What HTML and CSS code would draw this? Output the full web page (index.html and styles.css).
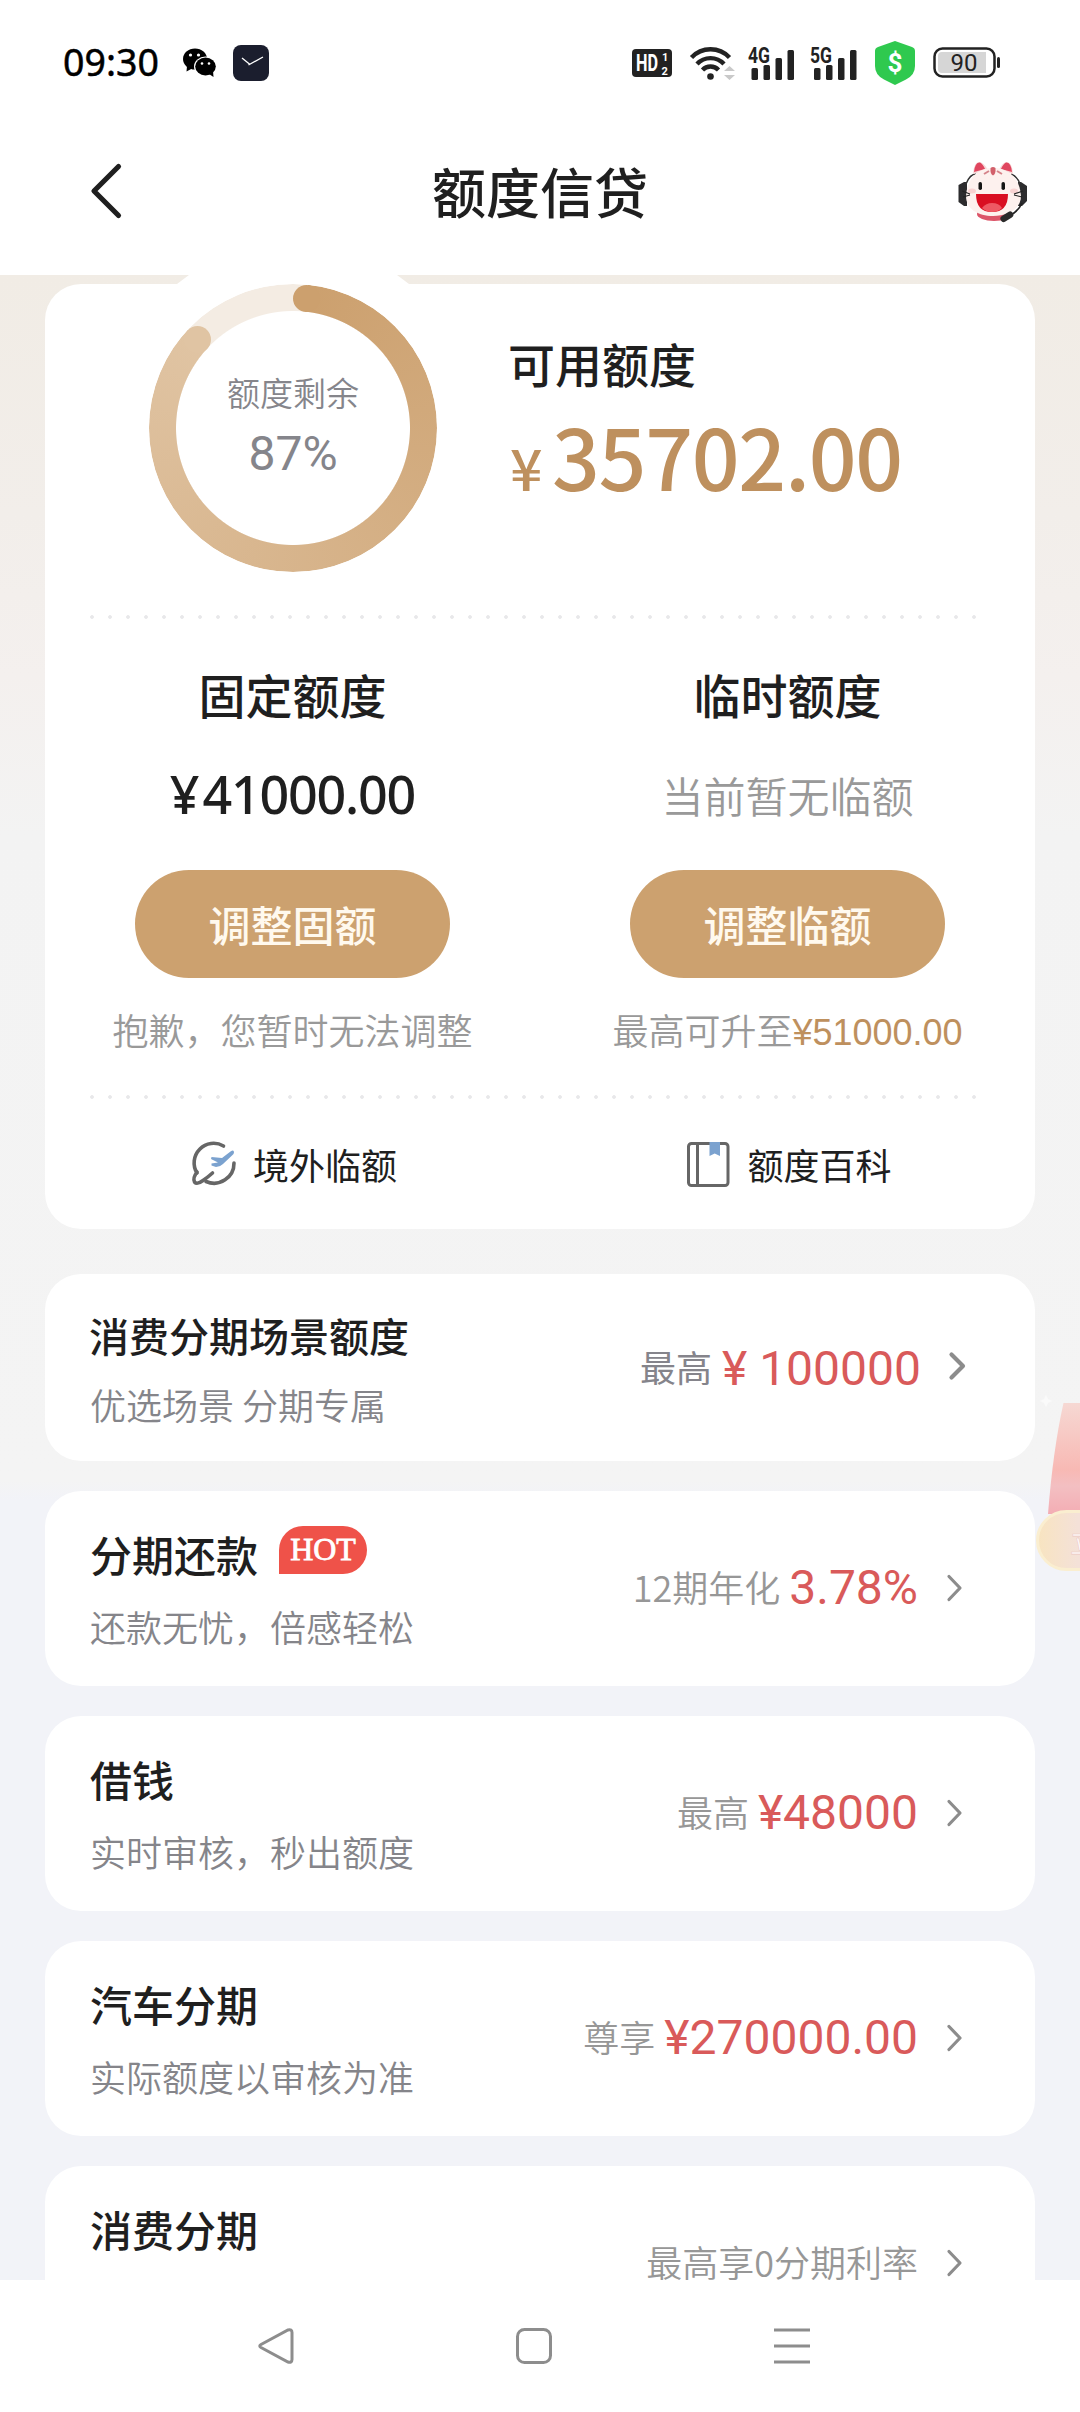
FILE: index.html
```html
<!DOCTYPE html>
<html lang="zh-CN">
<head>
<meta charset="utf-8">
<title>额度信贷</title>
<link rel="stylesheet" href="styles.css">
</head>
<body>
<div class="screen">
  <header class="top">
    <div class="status">
      <span class="clock">09:30</span>
      <svg class="wechat" width="33" height="29" viewBox="0 0 33 29">
        <ellipse cx="12" cy="11" rx="12" ry="10.5"/>
        <path d="M4 18 L3.5 23.500 L10 20z"/>
        <ellipse cx="22.500" cy="18.500" rx="11.500" ry="10" fill="#fff"/>
        <ellipse cx="22.500" cy="18.500" rx="10.300" ry="8.900"/>
        <path d="M26 26 L30.500 29 L30 23z"/>
        <g fill="#fff"><circle cx="7.500" cy="7" r="1.600"/><circle cx="15.500" cy="7" r="1.600"/><circle cx="19" cy="15.500" r="1.300"/><circle cx="26" cy="15.500" r="1.300"/></g>
      </svg>
      <svg class="clock-app" width="36" height="36" viewBox="0 0 36 36">
        <rect width="36" height="36" rx="8" fill="#1b1e2e"/>
        <path d="M9 13 L17 19.500 M15.500 20 L30 12" stroke="#fff" stroke-width="1.300" fill="none"/>
      </svg>
      <div class="status-right">
        <svg width="40" height="28" viewBox="0 0 40 28">
          <rect width="40" height="28" rx="4" fill="#222"/>
          <text class="hd" x="4" y="22" textLength="22" lengthAdjust="spacingAndGlyphs">HD</text>
          <text class="hd-n" x="30" y="12">1</text>
          <text class="hd-n" x="29.500" y="25.500">2</text>
        </svg>
        <svg width="40" height="34" viewBox="0 0 40 34">
          <g fill="none" stroke="#222" stroke-width="4.400">
            <path d="M1.500 11.500 A26 26 0 0 1 39.500 11.500"/>
            <path d="M7 18 A18.500 18.500 0 0 1 34 18"/>
            <path d="M12.500 24 A11 11 0 0 1 28.500 24"/>
          </g>
          <circle cx="20.500" cy="30.500" r="3.300" fill="#222"/>
          <path d="M34 25 L39.500 20 L45 25z M34 29 L45 29 L39.500 34z" fill="#c9c9c9"/>
        </svg>
        <svg width="44" height="34" viewBox="0 0 44 34">
          <text class="net" x="0" y="17" textLength="22" lengthAdjust="spacingAndGlyphs">4G</text>
          <g fill="#222"><rect x="3.500" y="22" width="6.500" height="12" rx="1.500"/><rect x="15.500" y="19" width="6.500" height="15" rx="1.500"/><rect x="27.500" y="12" width="6.500" height="22" rx="1.500"/><rect x="39.500" y="4" width="6.500" height="30" rx="1.500"/></g>
        </svg>
        <svg width="47" height="34" viewBox="0 0 47 34">
          <text class="net" x="0" y="17" textLength="22" lengthAdjust="spacingAndGlyphs">5G</text>
          <g fill="#222"><rect x="4" y="22" width="6.500" height="12" rx="1.500"/><rect x="16" y="19" width="6.500" height="15" rx="1.500"/><rect x="28" y="12" width="6.500" height="22" rx="1.500"/><rect x="40" y="4" width="6.500" height="30" rx="1.500"/></g>
        </svg>
        <svg width="40" height="44" viewBox="0 0 40 44">
          <path d="M20 0 L37 6 Q40 7 40 10 V25 Q40 34 31 38.500 L20 44 L9 38.500 Q0 34 0 25 V10 Q0 7 3 6z" fill="#2fc94f"/>
          <text class="dollar" x="20" y="31">$</text>
        </svg>
        <svg width="67" height="31" viewBox="0 0 67 31">
          <rect x="1.500" y="1.500" width="60" height="28" rx="8" fill="#fff" stroke="#222" stroke-width="2.500"/>
          <path d="M9 5 H53 V26 H9 Q5 26 5 22 V9 Q5 5 9 5z" fill="#d6d6d6"/>
          <rect x="64" y="10" width="3" height="11" rx="1.500" fill="#222"/>
          <text class="pct" x="31" y="24">90</text>
        </svg>
      </div>
    </div>
    <div class="title-bar">
      <svg class="back" width="32" height="56" viewBox="0 0 32 56"><path d="M28.500 3.500 L4 28 L28.500 52.500" fill="none" stroke="#1f1f1f" stroke-width="5.200" stroke-linecap="round" stroke-linejoin="round"/></svg>
      <h1>额度信贷</h1>
      <svg class="service" width="70" height="62" viewBox="0 0 70 62">
        <path d="M6 22 L0.500 25 V42 L6 46 H9 V22z M63 22 L69 26 V41 L64 46 H60 V22z" fill="#2c2c2e"/>
        <path d="M8 24 Q12 14 18 14 M62 24 Q59 16 53 14" fill="none" stroke="#333" stroke-width="1.500"/>
        <path d="M15 14 Q16 1 22 2 Q26 3 30 10z M55 14 Q54 1 48 2 Q44 3 41 10z" fill="#f7d8d8"/>
        <path d="M16 12 Q17 2 22 2.500 Q25 4 27 9z M54 12 Q53 2 48 2.500 Q45 4 43 9z" fill="#e0465f"/>
        <ellipse cx="36" cy="54" rx="17" ry="7" fill="#dc5468"/>
        <path d="M35 8 C52 8 62 20 63 36 C63 49 50 56 35 56 C20 56 8 49 8 36 C9 20 18 8 35 8z" fill="#fdf1ee"/>
        <path d="M32.500 8 Q35 6 37.500 8 Q38 14 35 15.500 Q32 14 32.500 8z" fill="#d2606b"/>
        <path d="M26 14 L31 11 M44 14 L39 11" stroke="#d5848a" stroke-width="2"/>
        <ellipse cx="14" cy="31" rx="4" ry="2.500" fill="#f8d3d2"/><ellipse cx="56" cy="31" rx="4" ry="2.500" fill="#f8d3d2"/>
        <rect x="20.500" y="22" width="3.500" height="8" rx="1.700" fill="#151515"/><rect x="43.500" y="22" width="3.500" height="8" rx="1.700" fill="#151515"/>
        <path d="M18 34 H50 Q50 52 34 52 Q18 52 18 34z" fill="#d90f22"/>
        <path d="M24 48 Q28 43 34 43 Q41 43 44 48 Q40 52 34 52 Q28 52 24 48z" fill="#ee5964"/>
        <path d="M4 31 L12 34 M5 37 L12 35 M65 31 L56 34 M64 37 L56 35" stroke="#222" stroke-width="1.200"/>
        <path d="M64 43 Q60 52 52 55" fill="none" stroke="#222" stroke-width="1.800"/>
        <rect x="42" y="53.500" width="14" height="6.500" rx="3.200" transform="rotate(-32 49 57)" fill="#2a2a2a"/>
      </svg>
    </div>
  </header>

  <main class="content">
    <section class="card summary">
      <div class="overview">
        <div class="ring">
          <div class="ring-track"></div>
          <div class="ring-arc"></div>
          <i class="cap cap-start"></i>
          <i class="cap cap-end"></i>
          <div class="ring-text"><span class="ring-label">额度剩余</span><span class="ring-value">87%</span></div>
        </div>
        <div class="available">
          <h2>可用额度</h2>
          <p class="amount"><span class="yen">¥</span>35702.00</p>
        </div>
      </div>
      <div class="dots"></div>
      <div class="limits">
        <div class="limit">
          <h2>固定额度</h2>
          <p class="fixed">¥<span>41000.00</span></p>
          <button>调整固额</button>
          <p class="hint">抱歉，您暂时无法调整</p>
        </div>
        <div class="limit">
          <h2>临时额度</h2>
          <p class="none">当前暂无临额</p>
          <button>调整临额</button>
          <p class="hint">最高可升至<b>¥51000.00</b></p>
        </div>
      </div>
      <div class="dots"></div>
      <div class="links">
        <a class="link">
          <svg width="44" height="44" viewBox="0 0 44 44">
            <g fill="none" stroke="#666" stroke-width="3.600" stroke-linecap="round" stroke-linejoin="round">
              <path d="M31.500 4 A19.500 19.500 0 0 0 5 31 M42 21 A20 20 0 0 1 14 39.500"/>
              <path d="M5 30 Q0.500 36 2.500 40 Q5 43 11 38.500 Q16 35 20.500 31"/>
            </g>
            <path d="M38.500 9.500 Q42 7 42 10.500 Q42 12 40 13.500 L31 22 Q28 25 24 25 L19.500 23.500 L19.500 21.500 L26 20.500 L19 17 L19.500 15 L30 16z" fill="#7ba2cf"/>
          </svg>
          <span>境外临额</span>
        </a>
        <a class="link">
          <svg width="43" height="45" viewBox="0 0 43 45">
            <rect x="1.500" y="1.500" width="39.500" height="42" rx="3" fill="none" stroke="#666" stroke-width="3"/>
            <path d="M10.500 2 V43" stroke="#666" stroke-width="3"/>
            <path d="M22.500 0 H33 V14 L27.700 11.500 L22.500 14z" fill="#7ba2cf"/>
          </svg>
          <span>额度百科</span>
        </a>
      </div>
    </section>

    <section class="card row row-first">
      <div class="row-text"><h3>消费分期场景额度</h3><p>优选场景 分期专属</p></div>
      <div class="row-value"><span class="dark">最高</span><em>¥ 100000</em></div>
      <svg class="chev" width="17" height="28" viewBox="0 0 17 28"><path d="M2.500 2.500 L14 14 L2.500 25.500"/></svg>
    </section>
    <section class="card row">
      <div class="row-text"><h3>分期还款<span class="hot">HOT</span></h3><p>还款无忧，倍感轻松</p></div>
      <div class="row-value"><span>12期年化</span><em>3.78%</em></div>
      <svg class="chev" width="17" height="28" viewBox="0 0 17 28"><path d="M3 2.500 L14 14 L3 25.500"/></svg>
    </section>
    <section class="card row">
      <div class="row-text"><h3>借钱</h3><p>实时审核，秒出额度</p></div>
      <div class="row-value"><span>最高</span><em>¥48000</em></div>
      <svg class="chev" width="17" height="28" viewBox="0 0 17 28"><path d="M3 2.500 L14 14 L3 25.500"/></svg>
    </section>
    <section class="card row">
      <div class="row-text"><h3>汽车分期</h3><p>实际额度以审核为准</p></div>
      <div class="row-value"><span>尊享</span><em>¥270000.00</em></div>
      <svg class="chev" width="17" height="28" viewBox="0 0 17 28"><path d="M3 2.500 L14 14 L3 25.500"/></svg>
    </section>
    <section class="card row">
      <div class="row-text"><h3>消费分期</h3></div>
      <div class="row-value"><span>最高享0分期利率</span></div>
      <svg class="chev" width="17" height="28" viewBox="0 0 17 28"><path d="M3 2.500 L14 14 L3 25.500"/></svg>
    </section>

    <svg class="float" width="46" height="180" viewBox="0 0 46 180">
      <defs>
        <linearGradient id="packet" x1="0" y1="0" x2="0" y2="1"><stop offset="0" stop-color="#f6d8d3"/><stop offset=".6" stop-color="#f8b9b4"/><stop offset=".75" stop-color="#f3bfc2"/><stop offset="1" stop-color="#f3adb4"/></linearGradient>
        <linearGradient id="pill" x1="0" y1="0" x2="1" y2="0"><stop offset="0" stop-color="#f8e4c0"/><stop offset=".45" stop-color="#f4e1d8"/></linearGradient>
      </defs>
      <path d="M12 5 L14 9 L18 11 L14 13 L12 17 L10 13 L6 11 L10 9z" fill="#fafafa"/>
      <path d="M29.500 13 H46 V124 H14 Q19 60 29.500 13z" fill="url(#packet)"/>
      <rect x="3.500" y="121.500" width="90" height="58" rx="29" fill="url(#pill)" stroke="#faeed0" stroke-width="3"/>
      <text class="float-text" x="36" y="163">立</text>
    </svg>
  </main>

  <nav class="nav">
    <svg width="36" height="36" viewBox="0 0 36 36"><path d="M3 16.500 L30 2 Q34 1 34 4.500 V31.500 Q34 35 30 34 L3 19.500 Q0.500 18 3 16.500z"/></svg>
    <svg width="36" height="36" viewBox="0 0 36 36"><rect x="1.500" y="1.500" width="33" height="33" rx="7"/></svg>
    <svg width="36" height="36" viewBox="0 0 36 36"><path d="M0 2 H36 M0 18 H36 M0 34 H36"/></svg>
  </nav>
</div>
</body>
</html>
```
FILE: styles.css
```css
* { box-sizing: border-box; margin: 0; padding: 0; }
body { background: #fff; font-family: "Noto Sans CJK SC", "Noto Sans", sans-serif; color: #1f1f1f; }
svg { display: block; overflow: visible; flex: none; }
.screen { width: 1080px; height: 2412px; display: flex; flex-direction: column; overflow: hidden; background: #fff; }

/* Status bar and title */
.top { height: 275px; flex: none; background: #fff; }
.status { height: 125px; display: flex; align-items: center; padding: 0 80px 0 63px; }
.clock { font: 400 37.5px/40px "Noto Sans", sans-serif; color: #000; width: 120px; margin-top: -1px; -webkit-text-stroke: .5px #000; }
.clock-app { margin-left: 17px; }
.status-right { margin-left: auto; display: flex; align-items: center; gap: 18px; }
.hd { font: 700 24px Roboto, sans-serif; fill: #fff; }
.hd-n { font: 700 11px Roboto, sans-serif; fill: #fff; }
.net { font: 700 22px Roboto, sans-serif; fill: #222; }
.dollar { font: 700 26px Roboto, sans-serif; fill: #fff; text-anchor: middle; }
.pct { font: 400 24px Roboto, sans-serif; fill: #222; text-anchor: middle; }
.title-bar { height: 132px; display: grid; grid-template-columns: 1fr auto 1fr; align-items: center; padding: 0 52px 0 90px; }
.title-bar h1 { font-size: 54px; line-height: 80px; font-weight: 500; position: relative; left: -19px; }
.title-bar .service { justify-self: end; }

/* Scrolling area */
.content { position: relative; height: 2005px; flex: none; overflow: hidden; padding: 9px 45px 0; display: flex; flex-direction: column; gap: 30px;
  background: linear-gradient(#f1ece5 0, #f2eeea 240px, #f4f0ee 400px, #f3f3f3 560px, #f4f4f4 1205px, #f2f3f8 1225px); }
.card { background: #fff; border-radius: 36px; flex: none; }
.summary { position: relative; height: 945px; margin-bottom: 15px; }
.summary::before { content: ""; position: absolute; left: 63px; top: -41px; width: 370px; height: 370px; border-radius: 50%; background: #fff; }
.overview { position: relative; height: 331px; display: flex; padding-left: 104px; gap: 71px; }
.ring { position: relative; width: 288px; height: 288px; display: flex; align-items: center; justify-content: center; }
.ring-track, .ring-arc { position: absolute; inset: 0; border-radius: 50%; -webkit-mask: radial-gradient(circle, transparent 116.5px, #000 117.5px); mask: radial-gradient(circle, transparent 116.5px, #000 117.5px); }
.ring-track { background: #f4ece3; }
.ring-arc { background: conic-gradient(transparent 6deg, #cca06e 6deg, #e0c4a3 313deg, transparent 313deg); }
.cap { position: absolute; width: 27px; height: 27px; border-radius: 50%; }
.cap-start { left: 144px; top: 1px; background: #cca06e; }
.cap-end { left: 35px; top: 41.500px; background: #e0c4a3; }
.ring-text { display: flex; flex-direction: column; align-items: center; color: #85858b; }
.ring-label { font-size: 33px; line-height: 48px; font-weight: 350; margin-top: -5px; }
.ring-value { font: 400 48px/60px Roboto, sans-serif; margin-top: 8px; }
.available { padding-top: 44px; }
h2 { font-size: 47px; line-height: 70px; font-weight: 500; }
.amount { font-size: 84px; line-height: 100px; font-weight: 500; color: #be905e; margin-top: 7px; white-space: nowrap; letter-spacing: -1.300px; }
.yen { font-size: 57px; line-height: 80px; display: inline-block; width: 42px; margin-left: 2px; }
.dots { height: 4px; width: 900px; margin-left: 38px; background: radial-gradient(circle, #e8e8ea 1.500px, transparent 2.200px) 0 0 / 18px 4px; }

.limits { display: flex; height: 476px; }
.limit { width: 495px; display: flex; flex-direction: column; align-items: center; padding-top: 40px; }
.fixed { font: 500 52px/60px "Noto Sans", sans-serif; margin-top: 35px; margin-bottom: 2px; height: 60px; letter-spacing: -1.200px; white-space: nowrap; }
.fixed span { margin-left: 4px; }
.none { font-size: 42px; line-height: 60px; font-weight: 350; color: #999; margin-top: 36px; margin-bottom: 1px; }
.limit button { width: 315px; height: 108px; flex: none; border: 0; border-radius: 54px; background: #cca16f; color: #fff9ee; font: 500 42px/60px "Noto Sans CJK SC", sans-serif; margin-top: 44px; }
.hint { font-size: 36px; line-height: 50px; font-weight: 350; color: #999; margin-top: 26px; white-space: nowrap; }
.hint b { font: 400 36px/50px "Liberation Sans", sans-serif; color: #be905e; }

.links { display: flex; height: 130px; }
.link { width: 495px; display: flex; align-items: center; justify-content: center; gap: 17px; font-size: 36px; line-height: 50px; padding-left: 4px; }

/* Product rows */
.row { height: 195px; display: flex; align-items: center; padding: 0 72px 0 45px; }
.row-text { align-self: flex-start; padding-top: 33px; flex: 1; }
.row h3 { font-size: 42px; line-height: 60px; font-weight: 500; display: flex; }
.row p { font-size: 36px; line-height: 50px; font-weight: 350; color: #85858a; margin-top: 17px; white-space: nowrap; }
.row-first { height: 187px; padding-right: 69px; padding-left: 44px; }
.row-first h3 { font-size: 40px; }
.row-first .row-text { padding-top: 31px; }
.row-first p { margin-top: 14px; padding-left: 1px; }
.hot { width: 88px; height: 48px; border-radius: 24px 24px 24px 0; background: #ef5249; color: #fff; font: 400 32px/47px "Liberation Serif", serif; -webkit-text-stroke: .8px #fff; text-align: center; margin: 2px 0 0 21px; }
.row-value { display: flex; align-items: center; gap: 9px; margin: -1px 28px 0 0; font-size: 36px; line-height: 50px; font-weight: 350; color: #979797; }
.row-value span { margin-bottom: 5px; }
.row-value .dark { color: #85848b; font-weight: 400; }
.row-value em { font: 400 48px/56px Roboto, sans-serif; color: #d95a5a; }
.row-first .row-value { gap: 10px; margin-right: 28px; margin-top: 2px; }
.chev { margin-top: -1px; }
.chev path { fill: none; stroke: #8c8c8c; stroke-width: 3.200; stroke-linecap: round; stroke-linejoin: round; }
.row-first .chev { margin-top: -3px; }
.row-first .chev path { stroke-width: 4.200; }
.float { position: absolute; right: 0; top: 1115px; }
.float-text { font-size: 28px; fill: #fffafa; stroke: #ecc9c4; stroke-width: .6px; }

/* System navigation */
.nav { height: 132px; display: flex; align-items: center; padding-left: 258px; gap: 222px; background: #fff; }
.nav svg { fill: none; stroke: #8d8d8d; stroke-width: 3; }
```
